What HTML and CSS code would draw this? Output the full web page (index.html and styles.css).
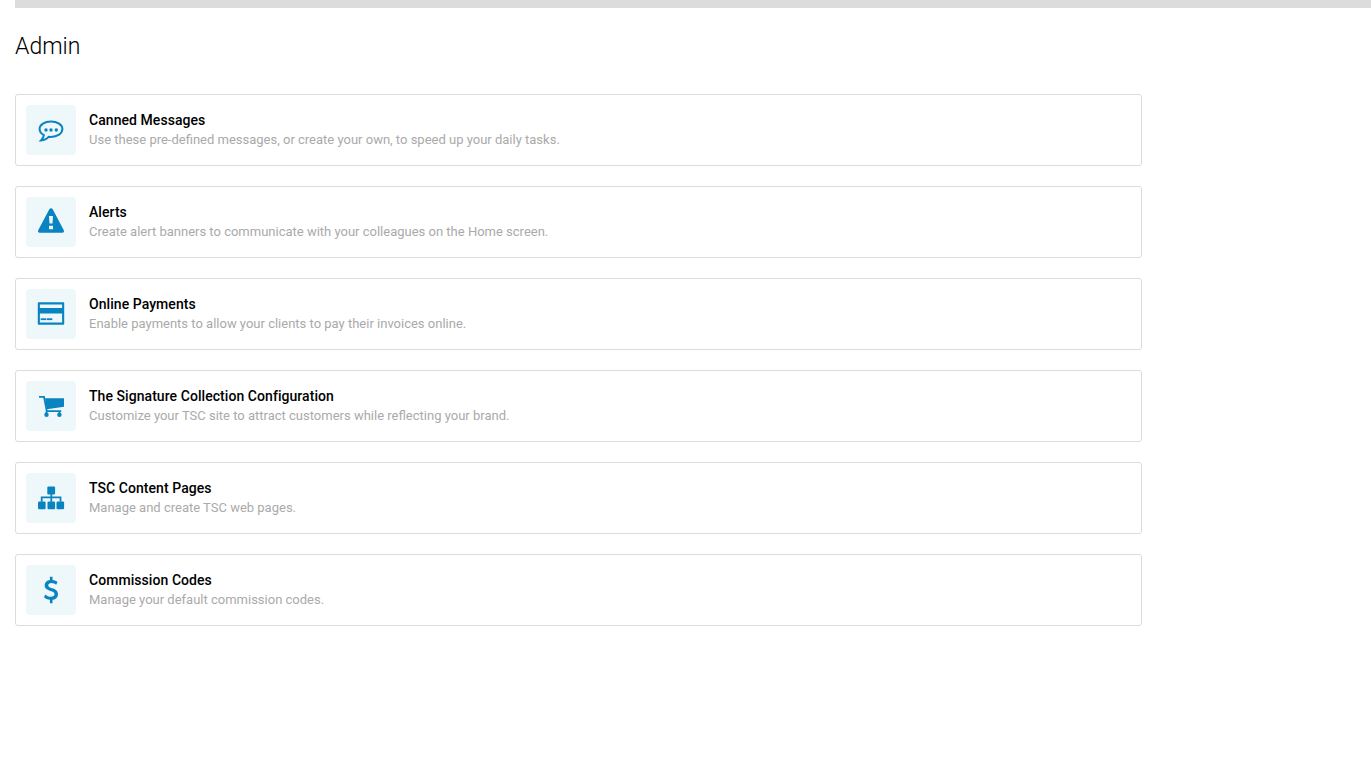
FILE: index.html
```html
<!DOCTYPE html>
<html lang="en">
<head>
<meta charset="utf-8">
<title>Admin</title>
<link rel="stylesheet" href="styles.css">
</head>
<body>
<div class="topbar"></div>
<main class="content">
  <h1 class="page-title">Admin</h1>
  <ul class="card-list">
    <li class="card">
      <div class="icon-box">
        <svg class="icon" viewBox="0 0 28 28" width="28" height="28">
          <path class="outline" d="M14 5.400C7.700 5.400 2.600 8.800 2.600 13.100c0 2.500 1.700 4.700 4.300 6.100-.3 1.900-1.300 3.700-2.900 5.200 3 0 6-1.500 7.800-3.700.7.100 1.400.2 2.200.2 6.300 0 11.400-3.500 11.400-7.800S20.300 5.400 14 5.400z"/>
          <circle cx="9" cy="14" r="1.700"/><circle cx="14" cy="14" r="1.700"/><circle cx="19.300" cy="14" r="1.700"/>
        </svg>
      </div>
      <div class="card-text">
        <div class="card-title">Canned Messages</div>
        <div class="card-desc">Use these pre-defined messages, or create your own, to speed up your daily tasks.</div>
      </div>
    </li>
    <li class="card">
      <div class="icon-box">
        <svg class="icon" viewBox="0 0 28 28" width="28" height="28">
          <path fill-rule="evenodd" d="M14 .3c.7 0 1.300.4 1.700 1l11.100 21c.6 1.200-.1 2.400-1.400 2.400H2.600c-1.300 0-2-1.200-1.400-2.400l11.100-21c.4-.6 1-1 1.700-1zM12 8l.5 7.500h3L16 8h-4zm0 9.700v3.600h4v-3.600h-4z"/>
        </svg>
      </div>
      <div class="card-text">
        <div class="card-title">Alerts</div>
        <div class="card-desc">Create alert banners to communicate with your colleagues on the Home screen.</div>
      </div>
    </li>
    <li class="card">
      <div class="icon-box">
        <svg class="icon" viewBox="0 0 28 28" width="28" height="28">
          <path fill-rule="evenodd" d="M1.800 2.300h24.400c.6 0 1 .4 1 1v20.400c0 .6-.4 1-1 1H1.800c-.6 0-1-.4-1-1V3.300c0-.6.4-1 1-1zM2.900 4.400v3.700h22.200V4.400H2.900zm0 9v9.200h22.200v-9.200H2.900z"/>
          <rect x="3.700" y="18.300" width="5.300" height="1.800"/><rect x="9.600" y="18.300" width="5.700" height="1.800"/>
        </svg>
      </div>
      <div class="card-text">
        <div class="card-title">Online Payments</div>
        <div class="card-desc">Enable payments to allow your clients to pay their invoices online.</div>
      </div>
    </li>
    <li class="card">
      <div class="icon-box">
        <svg class="icon" viewBox="0 0 28 28" width="28" height="28">
          <path class="cart-line" d="M2 4.800h5l2.800 14.300h14.400"/>
          <path d="M8 6.300h19v8.400L9.800 17.300z"/>
          <circle cx="9.500" cy="22.800" r="2.200"/><circle cx="22.400" cy="22.800" r="2.200"/>
          <path d="M8.600 19h1.800v3h-1.800zM21.500 19h1.800v3h-1.800z"/>
        </svg>
      </div>
      <div class="card-text">
        <div class="card-title">The Signature Collection Configuration</div>
        <div class="card-desc">Customize your TSC site to attract customers while reflecting your brand.</div>
      </div>
    </li>
    <li class="card">
      <div class="icon-box">
        <svg class="icon" viewBox="0 0 28 28" width="28" height="28">
          <rect x="10.300" y="2.500" width="7.800" height="8" rx="1.200"/>
          <rect x="1" y="17.500" width="7.600" height="7.800" rx="1.200"/><rect x="10.500" y="17.500" width="7.600" height="7.800" rx="1.200"/><rect x="19.500" y="17.500" width="7.600" height="7.800" rx="1.200"/>
          <path d="M13.400 10h1.800v2.500h9.200v5.200h-1.800v-3.400h-7.400v3.400h-1.800v-3.400H5.600v3.400H3.800v-5.200h9.600V10z"/>
        </svg>
      </div>
      <div class="card-text">
        <div class="card-title">TSC Content Pages</div>
        <div class="card-desc">Manage and create TSC web pages.</div>
      </div>
    </li>
    <li class="card">
      <div class="icon-box">
        <svg class="icon" viewBox="0 0 28 28" width="28" height="28">
          <path transform="translate(6.400 .7) scale(.96 1.043)" d="M6.800 0h2.700v3.200c2.200.2 3.900.9 5.200 1.900l-1.400 2.600c-1.300-1-3-1.700-4.900-1.700-2.100 0-3.400.9-3.400 2.300 0 1.500 1.500 2.100 4 2.800 3.300 .9 6.200 2.100 6.200 5.700 0 3-2.200 5-5.700 5.400V25.500H6.800v-3.300c-2.500-.3-4.700-1.200-6.200-2.600l1.500-2.500c1.500 1.300 3.500 2.200 5.700 2.200 2.400 0 3.800-1 3.800-2.600 0-1.700-1.600-2.300-4.300-3.100C4.200 12.700 1.300 11.500 1.300 8.200c0-2.700 2.100-4.600 5.500-5V0z"/>
        </svg>
      </div>
      <div class="card-text">
        <div class="card-title">Commission Codes</div>
        <div class="card-desc">Manage your default commission codes.</div>
      </div>
    </li>
  </ul>
</main>
</body>
</html>
```
FILE: styles.css
```css
* { box-sizing: border-box; }
html, body { margin: 0; padding: 0; background: #fff; }
body { font-family: Roboto, "Liberation Sans", sans-serif; }
.topbar { height: 8px; margin-left: 15px; background: #dcdcdc; }
.content { padding: 0 15px; }
.page-title { margin: 25px 0 33px; font-size: 23px; line-height: 28px; font-weight: 300; color: #000; }
.card-list { list-style: none; margin: 0; padding: 0; width: 1127px; display: flex; flex-direction: column; gap: 20px; }
.card { display: flex; align-items: center; gap: 13px; height: 72px; padding: 10px; background: #fff; border: 1px solid #dcdcdc; border-radius: 3px; }
.icon-box { flex: none; width: 50px; height: 50px; display: flex; align-items: center; justify-content: center; background: #eef7fa; border-radius: 4px; }
.icon { display: block; fill: #0a84c1; }
.outline { fill: none; stroke: #0a84c1; stroke-width: 2; }
.cart-line { fill: none; stroke: #0a84c1; stroke-width: 1.800; }
.card-text { display: flex; flex-direction: column; gap: 1px; }
.card-title { font-size: 14px; line-height: 18px; font-weight: 500; color: #000; letter-spacing: 0.06px; }
.card-desc { font-size: 13px; line-height: 19px; color: #aaa; }
```
